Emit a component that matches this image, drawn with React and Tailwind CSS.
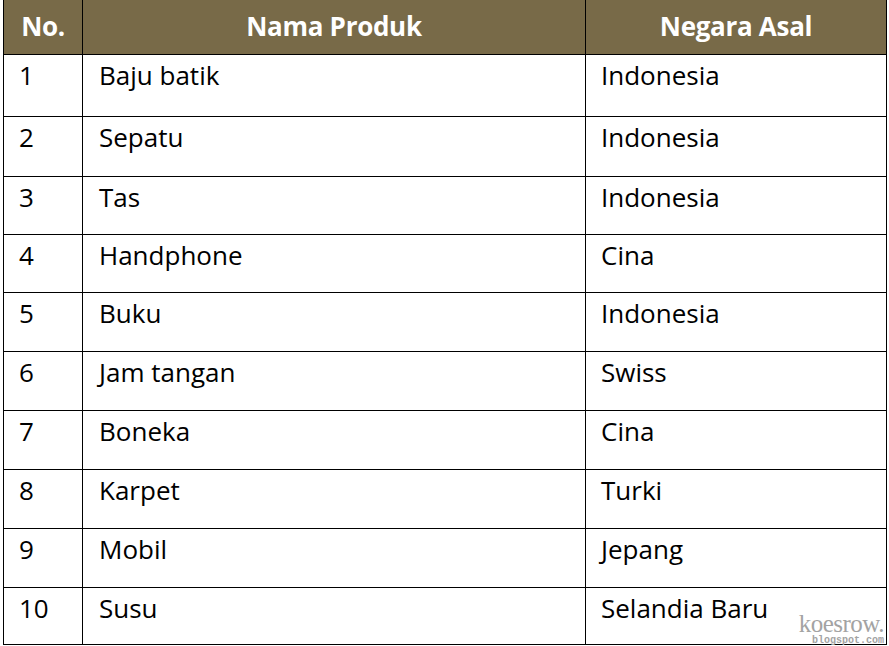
import React from "react";

const rows = [
  ["1", "Baju batik", "Indonesia", "h-[62px]"],
  ["2", "Sepatu", "Indonesia", "h-[60px]"],
  ["3", "Tas", "Indonesia", "h-[58px]"],
  ["4", "Handphone", "Cina", "h-[58px]"],
  ["5", "Buku", "Indonesia", "h-[59px]"],
  ["6", "Jam tangan", "Swiss", "h-[59px]"],
  ["7", "Boneka", "Cina", "h-[59px]"],
  ["8", "Karpet", "Turki", "h-[59px]"],
  ["9", "Mobil", "Jepang", "h-[59px]"],
  ["10", "Susu", "Selandia Baru", "h-[57px]"],
];

const App = () => {
  return (
    <div className="relative w-[889px] h-[646px] bg-white overflow-hidden font-['Open_Sans','Liberation_Sans',sans-serif] text-black">
      <table className="ml-[3px] w-[883px] border-collapse table-fixed">
        <colgroup>
          <col className="w-[79px]" />
          <col className="w-[503px]" />
          <col className="w-[301px]" />
        </colgroup>
        <thead>
          <tr className="h-[54px] bg-[#786a48] text-white text-[26px] font-bold tracking-[-0.3px]">
            <th className="border-x border-b border-black text-center align-middle">No.</th>
            <th className="border-x border-b border-black text-center align-middle">Nama Produk</th>
            <th className="border-x border-b border-black text-center align-middle">Negara Asal</th>
          </tr>
        </thead>
        <tbody className="text-[26px]">
          {rows.map(([no, name, country, h]) => (
            <tr key={no} className={h}>
              <td className="border border-black align-top pl-[15px] pt-[3px] leading-[34px]">{no}</td>
              <td className="border border-black align-top pl-[16px] pt-[3px] leading-[34px]">{name}</td>
              <td className="border border-black align-top pl-[15px] pt-[3px] leading-[34px]">{country}</td>
            </tr>
          ))}
        </tbody>
      </table>

      {/* watermark */}
      <div className="absolute right-[5px] bottom-0 flex flex-col items-end text-[#a3a3a3]">
        <span className="font-['Liberation_Serif',serif] text-[25px] leading-[25px] tracking-[-0.5px]">koesrow.</span>
        <span className="font-['Liberation_Mono',monospace] text-[10px] leading-[10px] font-bold">blogspot.com</span>
      </div>
    </div>
  );
};

export default App;
